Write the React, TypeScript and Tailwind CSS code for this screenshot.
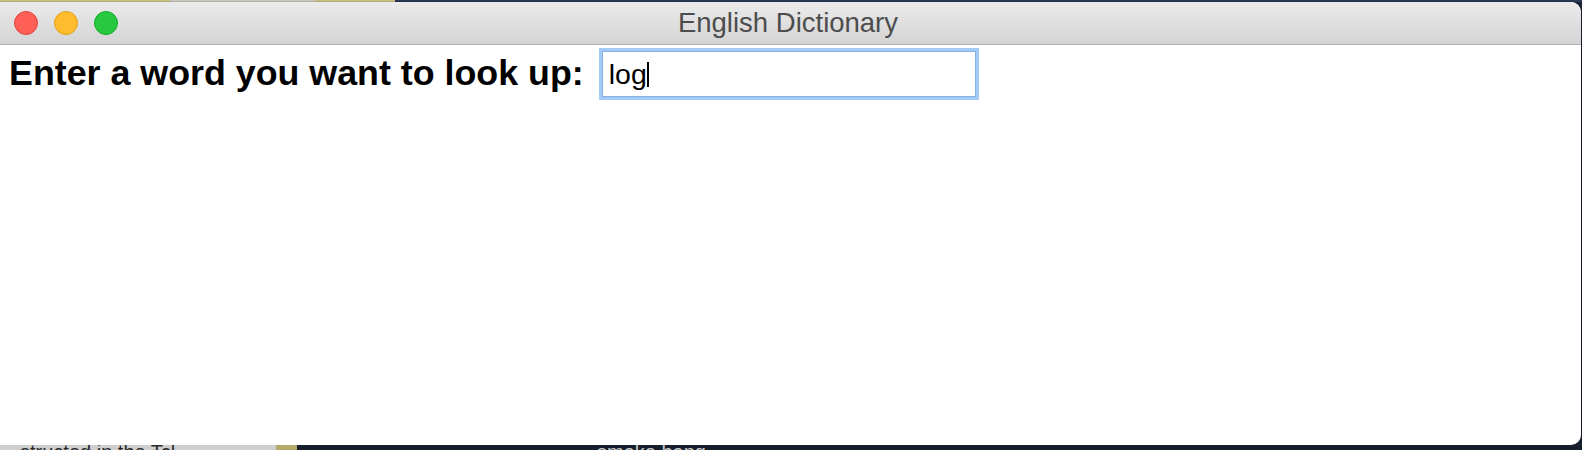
export default function App() {
  return (
    <div className="flex h-[450px] w-[1582px] flex-col overflow-hidden bg-[#1b2334] font-['Liberation_Sans',Arial,sans-serif]">
      {/* desktop behind, top edge */}
      <div className="flex h-[2px] shrink-0">
        <div className="w-[170px] bg-[#d9cf93]" />
        <div className="w-[145px] bg-[#d8d6cc]" />
        <div className="w-[80px] bg-[#d9cf93]" />
        <div className="flex-1 bg-[#2a3b5a]" />
      </div>

      {/* window */}
      <div className="ml-[-14px] flex h-[443px] w-[1595px] shrink-0 flex-col overflow-hidden rounded-[10px] bg-white shadow-[0_0_3px_rgba(0,0,0,0.5)]">
        {/* title bar */}
        <div className="relative flex h-[43px] shrink-0 items-center justify-center border-b border-[#b3b3b3] bg-gradient-to-b from-[#ebebeb] to-[#d4d4d4] pl-[9px]">
          <div className="absolute left-[28px] top-[9px] flex gap-[16px]">
            <span className="h-[24px] w-[24px] rounded-full border border-[#e2463f] bg-[#fe5f57]" />
            <span className="h-[24px] w-[24px] rounded-full border border-[#e1a116] bg-[#febc2e]" />
            <span className="h-[24px] w-[24px] rounded-full border border-[#12ac28] bg-[#28c840]" />
          </div>
          <span className="text-[27.5px] leading-none text-[#4d4d4d]">English Dictionary</span>
        </div>

        {/* content */}
        <div className="flex items-center pl-[23px] pt-[3px]">
          <span className="text-[35.8px] font-bold leading-none text-black">
            Enter a word you want to look up:
          </span>
          <div className="ml-[15px] flex h-[52px] w-[380px] items-center border-[3px] border-[#a4cbf6] bg-white shadow-[inset_0_0_0_1px_#86b3e6]">
            <span className="pl-[7px] text-[28.5px] leading-none text-black">log</span>
            <span className="h-[25px] w-[2px] bg-black" />
          </div>
        </div>
      </div>

      {/* desktop behind, bottom edge */}
      <div className="flex h-[5px] shrink-0 overflow-hidden">
        <div className="w-[276px] overflow-hidden bg-[#cfcfcf] pl-[20px] text-[20px] leading-[14px] text-[#2a2a2a]">
          structed in the Tcl
        </div>
        <div className="w-[21px] bg-[#b5aa6a]" />
        <div className="flex-1 overflow-hidden bg-[#161d2b] pl-[300px] text-[20px] leading-[14px] text-[#c8c8c8]">
          smake bang
        </div>
      </div>
    </div>
  );
}
